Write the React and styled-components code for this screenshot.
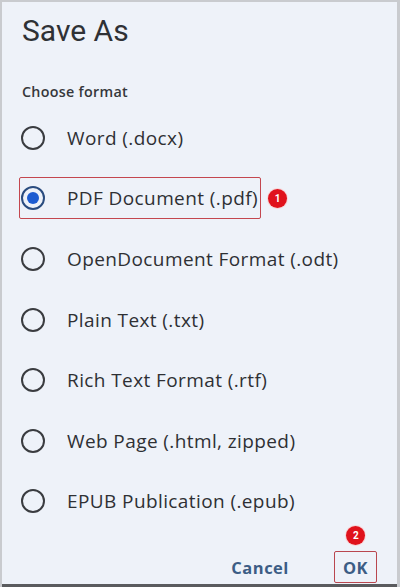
import React from "react";
import styled, { createGlobalStyle } from "styled-components";

const Global = createGlobalStyle`
  html, body { margin: 0; padding: 0; background: #c9cbcf; }
  * { box-sizing: border-box; }
`;

const Frame = styled.div`
  width: 400px;
  height: 587px;
  background: #c9cbcf;
  padding: 2px 3px 0 2px;
  display: flex;
  font-family: "Open Sans", Roboto, sans-serif;
`;

const Panel = styled.div`
  flex: 1;
  display: flex;
  flex-direction: column;
  background: #eef2f9;
  border-bottom: 3px solid #5a5b5e;
  padding: 11px 0 1px 0;
`;

const Title = styled.h1`
  margin: 0 0 0 20px;
  font-family: Roboto, "Open Sans", sans-serif;
  font-size: 30px;
  line-height: 36px;
  font-weight: 400;
  color: #2f3135;
`;

const Subtitle = styled.div`
  margin: 33px 0 0 20px;
  font-size: 14.3px;
  line-height: 20px;
  font-weight: 600;
  letter-spacing: 0.3px;
  color: #36383c;
`;

const List = styled.div`
  display: flex;
  flex-direction: column;
  margin-top: 5.5px;
`;

const Row = styled.div`
  height: 60.6px;
  display: flex;
  align-items: center;
  padding-left: 17px;
`;

const Label = styled.div`
  height: 42px;
  display: inline-flex;
  align-items: center;
  gap: 22px;
  padding: 0 2px 0 1px;
  border: 1.5px solid ${(p) => (p.$marked ? "#c4474f" : "transparent")};
  border-radius: 2px;
`;

const Radio = styled.span`
  width: 24px;
  height: 24px;
  border-radius: 50%;
  border: ${(p) => (p.$checked ? "2.5px solid #2a4c7f" : "2px solid #3a3c40")};
  display: flex;
  align-items: center;
  justify-content: center;
  flex-shrink: 0;
  &::after {
    content: "";
    display: ${(p) => (p.$checked ? "block" : "none")};
    width: 12px;
    height: 12px;
    border-radius: 50%;
    background: #1d5cd1;
  }
`;

const OptionText = styled.span`
  font-size: 19px;
  letter-spacing: 0.4px;
  color: #2e3034;
  white-space: nowrap;
`;

const Badge = styled.span`
  width: 19px;
  height: 19px;
  border-radius: 50%;
  background: #e0121c;
  color: #fff;
  font-family: Roboto, sans-serif;
  font-size: 10px;
  font-weight: 700;
  letter-spacing: 0;
  display: flex;
  align-items: center;
  justify-content: center;
  box-shadow: 0 0 0 1px #f6d6d8;
  margin-left: 7px;
`;

const Footer = styled.div`
  margin-top: auto;
  display: flex;
  justify-content: flex-end;
  align-items: center;
  gap: 44px;
  padding-right: 20px;
`;

const TextButton = styled.button`
  position: relative;
  background: none;
  font-family: inherit;
  font-size: 16.5px;
  font-weight: 700;
  letter-spacing: 0.5px;
  color: #3c5d85;
  height: 32px;
  padding: 0 ${(p) => (p.$marked ? "8px" : "0")};
  border: 1.5px solid ${(p) => (p.$marked ? "#b9474f" : "transparent")};
  border-radius: 2px;
  cursor: pointer;
`;

const FloatBadge = styled(Badge)`
  position: absolute;
  left: 50%;
  top: -26px;
  margin-left: -9px;
`;

const options = [
  "Word (.docx)",
  "PDF Document (.pdf)",
  "OpenDocument Format (.odt)",
  "Plain Text (.txt)",
  "Rich Text Format (.rtf)",
  "Web Page (.html, zipped)",
  "EPUB Publication (.epub)",
];

export default function App() {
  const selected = 1;
  return (
    <>
      <Global />
      <Frame>
        <Panel>
          <Title>Save As</Title>
          <Subtitle>Choose format</Subtitle>
          <List>
            {options.map((o, i) => (
              <Row key={o}>
                <Label $marked={i === selected}>
                  <Radio $checked={i === selected} />
                  <OptionText>{o}</OptionText>
                </Label>
                {i === selected && <Badge>1</Badge>}
              </Row>
            ))}
          </List>
          <Footer>
            <TextButton>Cancel</TextButton>
            <TextButton $marked>
              OK
              <FloatBadge>2</FloatBadge>
            </TextButton>
          </Footer>
        </Panel>
      </Frame>
    </>
  );
}
